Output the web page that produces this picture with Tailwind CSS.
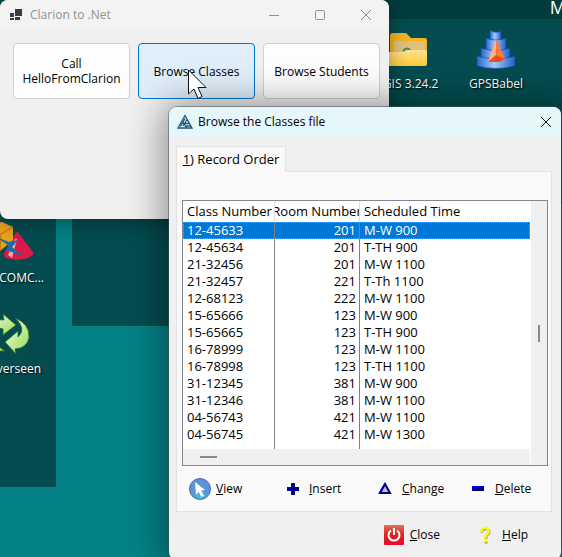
<!DOCTYPE html>
<html lang="en">
<head>
<meta charset="utf-8">
<meta name="viewport" content="width=device-width, initial-scale=1">
<title>Clarion to .Net</title>
<script src="https://cdn.jsdelivr.net/npm/@tailwindcss/browser@4"></script>
</head>
<body class="relative min-h-screen overflow-hidden bg-[#048286] font-['Open_Sans','Noto_Sans',sans-serif] text-xs text-black">

<!-- Desktop fences -->
<div class="absolute left-0 top-0 h-[487px] w-14 bg-[#044c50]"></div>
<div class="absolute left-[72px] top-0 h-[326px] w-[280px] bg-[#044c50]"></div>
<div class="absolute left-[352px] right-0 top-0 h-[204px] bg-[#044c50]">
  <div class="h-[19px] overflow-hidden bg-[#033c3d] text-right text-lg leading-[14px] text-white"><span class="-mr-1">M</span></div>
</div>

<!-- Desktop icons -->
<div class="absolute left-[370px] top-[28px] flex w-20 flex-col items-center">
  <svg class="h-12 w-12" viewBox="0 0 48 48" aria-hidden="true">
    <defs><linearGradient id="fold" x2="0" y2="1"><stop stop-color="#ffe391"/><stop offset="1" stop-color="#fbc93a"/></linearGradient></defs>
    <path d="M4 8q0-3 3-3h12q2 0 3 2l3 3h14q2 0 2 2v24H4z" fill="#f0b323"/>
    <path d="M8 13h29q2 0 2 2v16H8z" fill="#dfc17c"/>
    <path d="M17 23q4-5 8 0" fill="none" stroke="#3f8d5a" stroke-width="2"/>
    <path d="M1 24h17l4-2h17q2 0 2 2v12q0 2-2 2H3q-2 0-2-2z" fill="url(#fold)"/>
  </svg>
  <span class="w-full pr-2 text-center leading-4 text-white [text-shadow:1px_1px_2px_black]">QGIS 3.24.2</span>
</div>
<div class="absolute left-[456px] top-[28px] flex w-20 flex-col items-center">
  <svg class="h-12 w-12" viewBox="0 0 48 48" aria-hidden="true">
    <defs><linearGradient id="tower"><stop stop-color="#2668cf"/><stop offset=".45" stop-color="#a3cbff"/><stop offset="1" stop-color="#1f5fc8"/></linearGradient></defs>
    <g fill="url(#tower)" stroke="#17479c" stroke-width=".7">
      <path d="M18 2q6 4 11 1v12H18z"/><path d="M14 10q10 4 20 0v14H14z"/><path d="M9 20q15 5 29 0v12H9z"/><path d="M5 28q19 6 38 0v10q-19 5-38 0z"/>
    </g>
    <path d="M24 11l9 20-6 3H16z" fill="#ff7a35"/><path d="M24 11l-8 23 8-7z" fill="#ffb184"/><path d="M16 34l8-7 9 4-6 3z" fill="#e9501c"/>
  </svg>
  <span class="leading-4 text-white [text-shadow:1px_1px_2px_black]">GPSBabel</span>
</div>
<div class="absolute -left-7 top-[219px] flex w-[72px] flex-col items-end">
  <svg class="mr-2 h-12 w-12" viewBox="0 0 48 48" aria-hidden="true">
    <path d="M29 12l16 21q1 3-3 5-10 5-24 1-3-1-2-5z" fill="#da1a49"/><path d="M27 20l-7 16 4 3 5-19z" fill="#f5a3b5"/>
    <path d="M0 4l14-1 11 5v13L12 32 0 28z" fill="#e8a21d"/><path d="M0 13l13 2 12-7M13 15l-1 17" fill="none" stroke="#b57812"/>
    <path d="M6 17l15 6 9-2-6 7 11 9-17-6 2-5z" fill="#176f9f"/>
  </svg>
  <span class="mt-[3px] leading-4 whitespace-nowrap text-white [text-shadow:1px_1px_2px_black]">TCOMC...</span>
</div>
<div class="absolute -left-7 top-[310px] flex w-[76px] flex-col items-end">
  <svg class="mr-[18px] h-12 w-12" viewBox="0 0 48 48" aria-hidden="true">
    <defs><linearGradient id="arrows" x2="1" y2="1"><stop stop-color="#f5fff0"/><stop offset="1" stop-color="#93d951"/></linearGradient></defs>
    <g fill="url(#arrows)" stroke="#2f691d" stroke-width=".8">
      <path d="M5 18Q9 8 22 10l-1-6 13 11-13 10v-6Q12 16 5 22z"/>
      <path d="M33 8q15 6 14 20-2 10-14 11l1 5-11-12 13-11v6q9-8-3-19z"/>
      <path d="M10 26q3 9 13 15h-8Q6 35 5 28z"/>
    </g>
  </svg>
  <span class="mr-[7px] mt-[3px] leading-4 text-white [text-shadow:1px_1px_2px_black]">Neverseen</span>
</div>

<!-- Launcher window -->
<main class="absolute left-0 top-0 w-[389px] overflow-hidden rounded-lg bg-[#f0f0f0] shadow-[0_4px_20px_rgba(0,0,0,0.35)]">
  <header class="flex h-[30px] items-center bg-[#f3f3f3] text-[#929292]">
    <svg class="ml-[9px] h-3 w-[14px]" viewBox="0 0 14 12" fill="#3c3c3c" aria-hidden="true"><path d="M6 0h7v7H6zM1 4h4v4H1zM1 9h4v2H1zM6 8h5v3H6z"/></svg>
    <h1 class="ml-[7px] grow">Clarion to .Net</h1>
    <button aria-label="Minimize" class="flex w-[46px] justify-center"><svg class="size-3" viewBox="0 0 12 12" stroke="#8f8f8f"><path d="M1 6.500h10"/></svg></button>
    <button aria-label="Maximize" class="flex w-[46px] justify-center"><svg class="size-3" viewBox="0 0 12 12" fill="none" stroke="#8f8f8f"><rect x="1.500" y="1.500" width="9" height="9" rx="1"/></svg></button>
    <button aria-label="Close launcher" class="flex w-[46px] justify-center"><svg class="size-3" viewBox="0 0 12 12" stroke="#8f8f8f"><path d="M1 1l10 10M11 1L1 11"/></svg></button>
  </header>
  <div class="grid grid-cols-3 gap-2 px-[9px] pb-[120px] pl-[13px] pt-[13px]">
    <button class="h-14 rounded border border-[#d0d0d0] bg-[#fdfdfd] leading-[15px]">Call<br>HelloFromClarion</button>
    <button class="h-14 rounded border border-[#0078d4] bg-[#e0eef9] leading-[15px]">Browse Classes</button>
    <button class="h-14 rounded border border-[#d0d0d0] bg-[#fdfdfd] leading-[15px]">Browse Students</button>
  </div>
</main>

<!-- Browse window -->
<section class="absolute left-[169px] right-px top-[107px] overflow-hidden rounded-lg bg-[#f0f0f0] shadow-[0_2px_36px_6px_rgba(0,0,0,0.4),0_0_0_1px_rgba(90,100,100,0.5)]">
  <header class="flex h-[30px] items-center bg-[#e5f7fa]">
    <svg class="ml-2 h-4 w-4" viewBox="0 0 16 16" fill="none" stroke="#1f5877" stroke-width="1.300" aria-hidden="true"><path d="M8 1.500l7 12.500H1zM8 4.500L3.500 12.500M6 8l3.500 6M10 5.500L6 12M7.500 9.500h4M9 12h4.500"/></svg>
    <h2 class="ml-[5px] grow">Browse the Classes file</h2>
    <button aria-label="Close window" class="mr-2 p-px"><svg class="size-3" viewBox="0 0 12 12" stroke="#111"><path d="M1 1l10 10M11 1L1 11"/></svg></button>
  </header>

  <div class="pb-3 pl-[7px] pr-[9px] pt-[9px]">
    <button role="tab" aria-selected="true" class="relative -mb-px block h-[26px] w-[110px] border border-b-0 border-[#e2e2e2] bg-[#f9f9f9] text-[13px]"><u>1</u>) Record Order</button>
    <div class="border border-[#e2e2e2] bg-[#f9f9f9] pb-[10px] pl-[5px] pr-[3px] pt-7">
      <div class="flex border border-[#828790] bg-white text-[13px]">
        <div class="min-w-0 grow">
          <table class="w-full table-fixed border-separate border-spacing-0">
            <colgroup><col class="w-[92px]"><col class="w-[85px]"><col></colgroup>
            <thead>
              <tr class="h-[21px] text-left leading-[21px]">
                <th class="border-r border-[#e0e0e0] p-0 pl-1 font-normal whitespace-nowrap">Class Number</th>
                <th class="border-r border-[#e0e0e0] p-0 font-normal"><div class="flex justify-center overflow-hidden whitespace-nowrap"><span>Room Number</span></div></th>
                <th class="p-0 pl-1 font-normal">Scheduled Time</th>
              </tr>
            </thead>
            <tbody id="rows" class="leading-[17px]"></tbody>
          </table>
          <div class="flex h-4 items-center bg-[#f0f0f0] pl-[17px]"><div class="h-0.5 w-[17px] bg-[#8a8a8a]"></div></div>
        </div>
        <div class="ml-px flex w-4 shrink-0 items-center justify-center bg-[#f0f0f0]"><div class="h-[17px] w-0.5 bg-[#8a8a8a]"></div></div>
      </div>

      <div class="mt-[11px] grid grid-cols-[93px_93px_93px_auto] pl-[6px]">
        <button class="flex h-6 items-center gap-1">
          <svg class="size-6" viewBox="0 0 24 24" aria-hidden="true">
            <defs><radialGradient id="orb" cy="1"><stop stop-color="#3fc6df"/><stop offset="1" stop-color="#5b93d8"/></radialGradient></defs>
            <circle cx="12" cy="12" r="10.500" fill="url(#orb)" stroke="#47719f"/><path d="M7 5l10 8-4 .5 3 5-2.500 1.500-3-5-2.500 3z" fill="#fff"/>
          </svg><span><u>V</u>iew</span></button>
        <button class="flex h-6 items-center gap-1">
          <svg class="size-6" viewBox="0 0 24 24" aria-hidden="true"><path d="M10 6h4v4h4v4h-4v4h-4v-4H6v-4h4z" fill="#000080"/><path d="M10.500 18V13.500H6.500v-3h4V6.500H14" fill="none" stroke="#00f"/></svg><span><u>I</u>nsert</span></button>
        <button class="flex h-6 items-center gap-1">
          <svg class="size-6" viewBox="0 0 24 24" aria-hidden="true"><path d="M11 7l5 9H6z" fill="#c0c0c0" stroke="#000080" stroke-width="2"/><path d="M5 16l6-10" stroke="#00f"/></svg><span><u>C</u>hange</span></button>
        <button class="flex h-6 items-center gap-1">
          <svg class="size-6" viewBox="0 0 24 24" aria-hidden="true"><path d="M5 9h12v5H5z" fill="#000080"/><path d="M5.500 14v-4.500H17" fill="none" stroke="#00f"/></svg><span><u>D</u>elete</span></button>
      </div>
    </div>

    <div class="mt-[11px] flex justify-end gap-[34px] pb-px pr-6">
      <button class="flex h-6 items-center gap-1">
        <svg class="size-6" viewBox="0 0 24 24" aria-hidden="true">
          <defs><linearGradient id="power" x2="0" y2="1"><stop stop-color="#dc7458"/><stop offset=".5" stop-color="#d92420"/><stop offset="1" stop-color="#ef0826"/></linearGradient></defs>
          <rect x="2" y="2" width="20" height="20" rx="1" fill="url(#power)"/><path d="M9 7.500a5.500 5.500 0 1 0 6 0M12 5v7" fill="none" stroke="#fff" stroke-width="2"/>
        </svg><span><u>C</u>lose</span></button>
      <button class="flex h-6 items-center gap-1">
        <svg class="size-6" viewBox="0 0 24 24" fill="none" aria-hidden="true"><path d="M8 9.500V7.500L10 6h3l2 1.500v3L12 13v3M12 18v2.500" stroke="#808080" stroke-width="2.500"/><path d="M7.500 9V7L9.500 5h3l2 2v3l-3 2.500v3M11.500 17v2.500" stroke="#ff0" stroke-width="2.500"/></svg><span><u>H</u>elp</span></button>
    </div>
  </div>
</section>

<!-- Pointer -->
<svg class="pointer-events-none absolute left-[187px] top-[68px] h-8 w-5" viewBox="0 0 20 32" aria-hidden="true"><path d="M1.500 2v24l5.500-5 4 9.500 4-2-4-9h8z" fill="#fff" stroke="#111"/></svg>

<script>
const records = [
  ["12-45633", 201, "M-W 900"], ["12-45634", 201, "T-TH 900"], ["21-32456", 201, "M-W 1100"],
  ["21-32457", 221, "T-Th 1100"], ["12-68123", 222, "M-W 1100"], ["15-65666", 123, "M-W 900"],
  ["15-65665", 123, "T-TH 900"], ["16-78999", 123, "M-W 1100"], ["16-78998", 123, "T-TH 1100"],
  ["31-12345", 381, "M-W 900"], ["31-12346", 381, "M-W 1100"], ["04-56743", 421, "M-W 1100"],
  ["04-56745", 421, "M-W 1300"]
];
document.getElementById("rows").innerHTML = records.map(([cls, room, time], i) => `
  <tr class="${i === 0 ? "h-[17px] bg-[#0078d7] text-white outline-1 -outline-offset-1 outline-dotted outline-[#e08a3c]" : "h-[17px]"}">
    <td class="border-r border-[#808080] p-0 pl-1">${cls}</td>
    <td class="border-r border-[#808080] p-0 pr-[3px] text-right">${room}</td>
    <td class="p-0 pl-1">${time}</td>
  </tr>`).join("") + `
  <tr class="h-[6px]"><td class="border-r border-[#808080] p-0"></td><td class="border-r border-[#808080] p-0"></td><td class="p-0"></td></tr>`;
</script>
</body>
</html>
